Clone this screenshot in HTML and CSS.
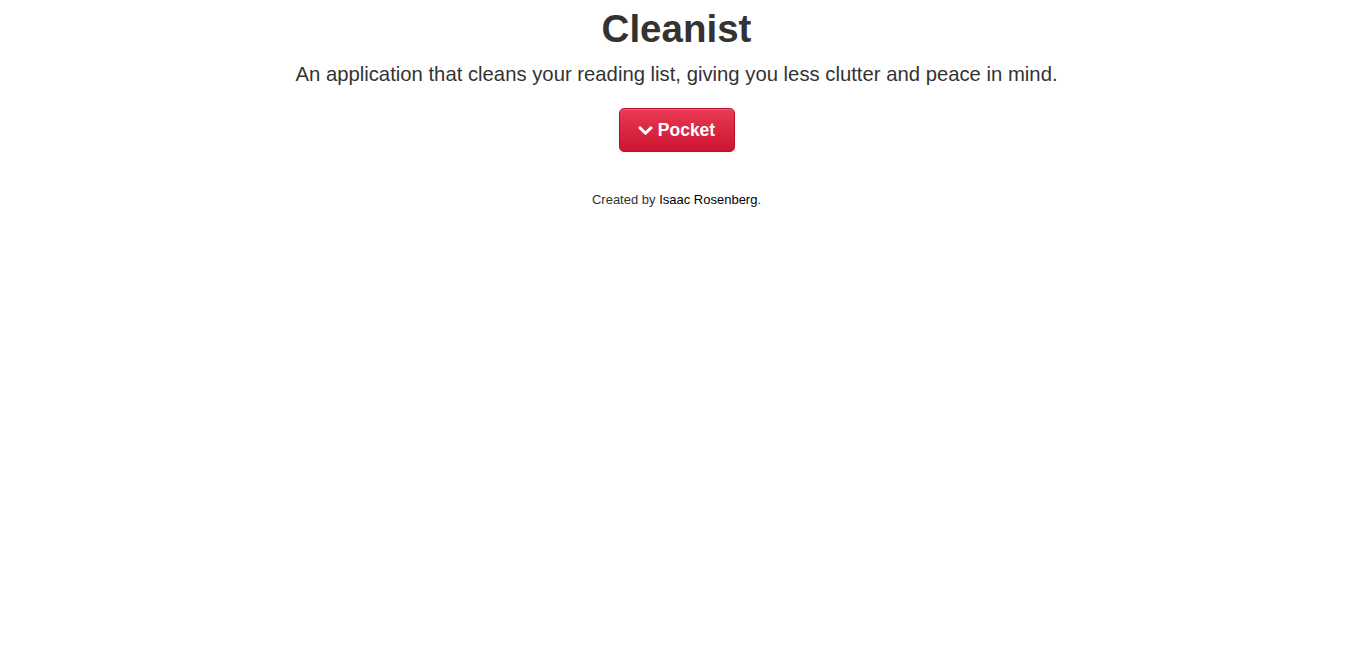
FILE: index.html
```html
<!DOCTYPE html>
<html>
<head>
<meta charset="utf-8">
<title>Cleanist</title>
<link rel="stylesheet" href="styles.css">
</head>
<body>
<main class="hero">
  <h1 class="title">Cleanist</h1>
  <p class="lead">An application that cleans your reading list, giving you less clutter and peace in mind.</p>
  <a class="btn-pocket" href="#">
    <svg class="chev" viewBox="0 0 16 16" width="15" height="15" aria-hidden="true"><path d="M2.2 5.2 L8 11 L13.8 5.2" fill="none" stroke="#fff" stroke-width="3.2" stroke-linecap="round" stroke-linejoin="round"/></svg>
    <span>Pocket</span>
  </a>
  <p class="credit">Created by <a href="#">Isaac Rosenberg</a>.</p>
</main>
</body>
</html>
```
FILE: styles.css
```css
html, body {
  margin: 0;
  padding: 0;
  background: #fff;
}
body {
  font-family: "Liberation Sans", Arial, sans-serif;
  color: #333;
}
.hero {
  display: flex;
  flex-direction: column;
  align-items: center;
  text-align: center;
  padding-top: 9px;
}
.title {
  margin: 0;
  font-size: 38.5px;
  line-height: 40px;
  font-weight: bold;
  color: #333;
}
.lead {
  margin: 10px 0 0;
  font-size: 20.3px;
  line-height: 30px;
  font-weight: normal;
  color: #333;
}
.btn-pocket {
  margin-top: 19px;
  display: inline-flex;
  align-items: center;
  gap: 5px;
  box-sizing: border-box;
  height: 44px;
  width: 116px;
  justify-content: center;
  padding: 0 18px;
  border-radius: 5px;
  border: 1px solid #b80f2c;
  background: linear-gradient(to bottom, #ea3a54, #cb1430);
  color: #fff;
  text-decoration: none;
  font-size: 17.5px;
  font-weight: bold;
  box-shadow: inset 0 1px 0 rgba(255,255,255,0.2), 0 1px 2px rgba(0,0,0,0.05);
}
.chev {
  display: block;
  margin-top: 1px;
}
.credit {
  margin: 39px 0 0;
  font-size: 13px;
  line-height: 18px;
  color: #333;
}
.credit a {
  color: #000;
  text-decoration: none;
}
```
